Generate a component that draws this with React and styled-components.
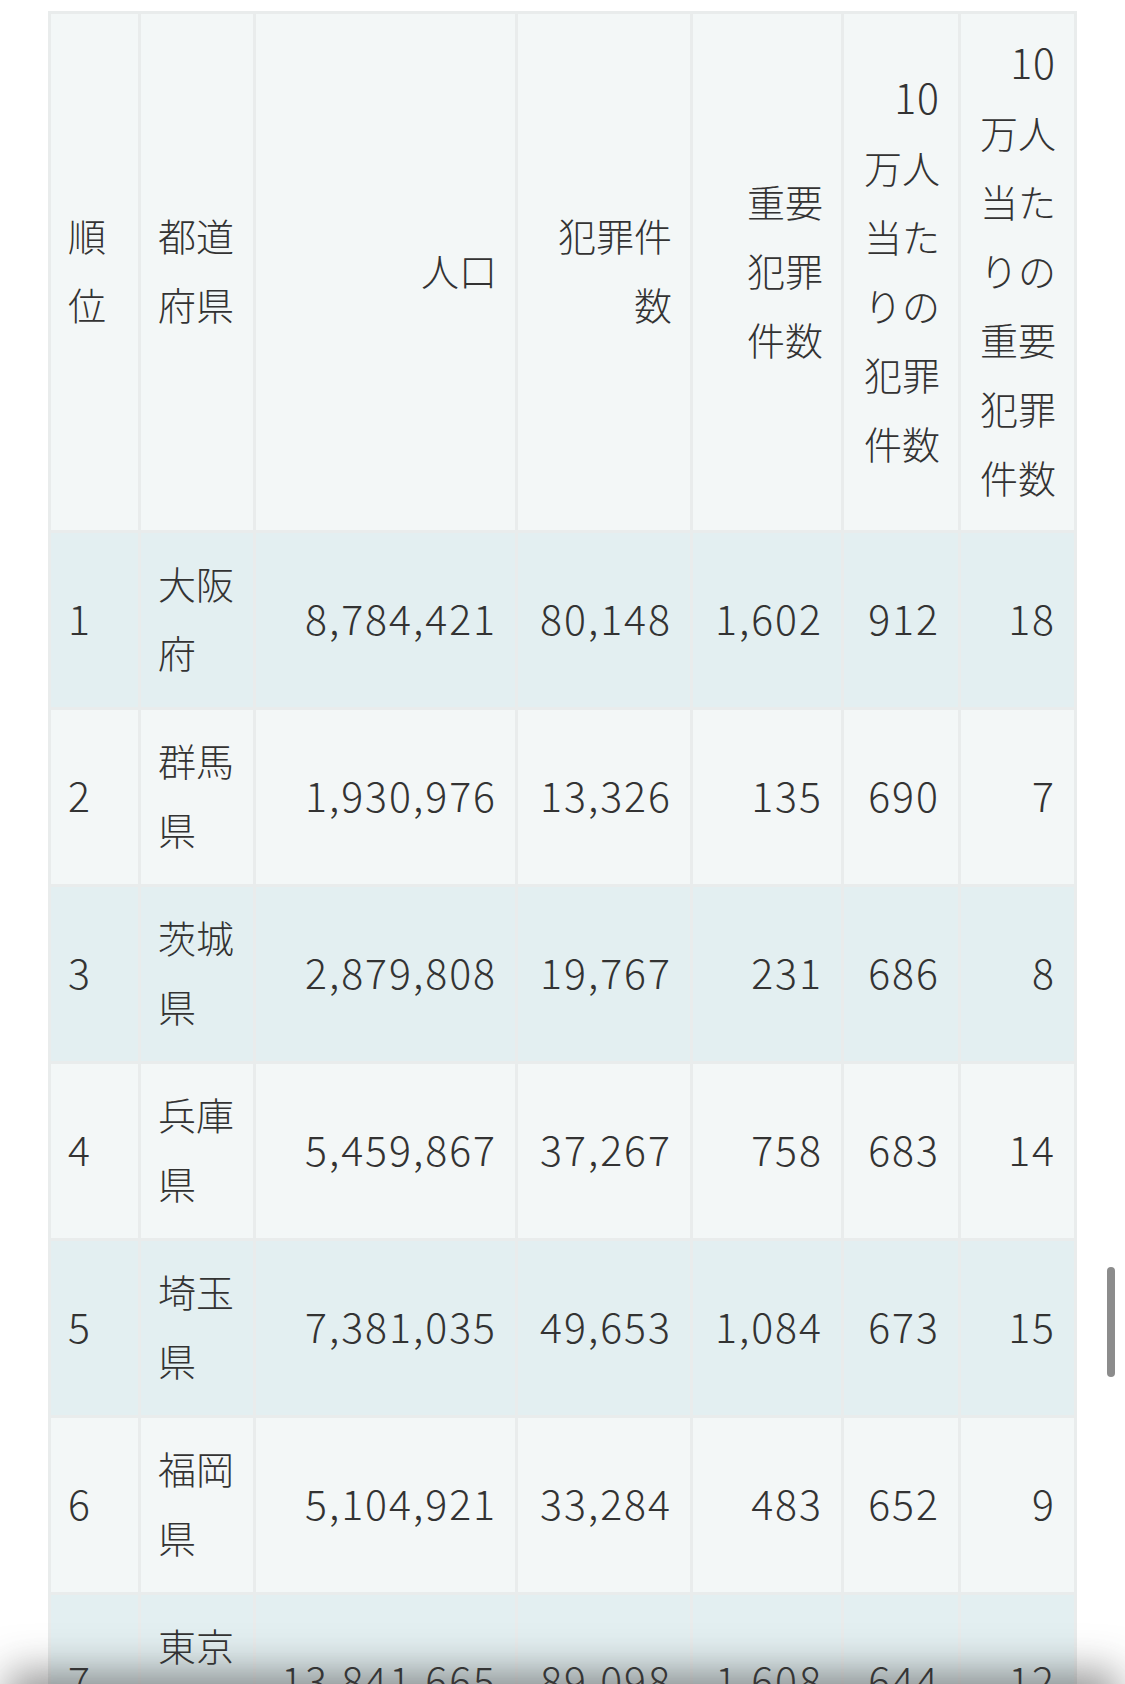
import React from 'react';
import styled, { createGlobalStyle } from 'styled-components';

const COLOURS = {
  text: '#333333',
  head: '#f3f7f7',
  even: '#f3f7f7',
  odd: '#e3eff1',
  line: '#e9ecec',
};

const GlobalStyle = createGlobalStyle`
  html, body {
    margin: 0;
    padding: 0;
    background: #ffffff;
  }
  body {
    font-family: "Noto Sans CJK JP", "Noto Sans", sans-serif;
    color: ${COLOURS.text};
  }
`;

const SPage = styled.div`
  position: relative;
  padding: 11px 0 0 48px;
  height: 1684px;
  overflow: hidden;
  box-sizing: border-box;
`;

const STable = styled.table`
  width: 1029px;
  table-layout: fixed;
  border-collapse: collapse;
  border: 3px solid ${COLOURS.line};
  font-size: 38px;
  line-height: 69px;
  font-weight: 300;
`;

const SHeadCell = styled.th`
  background: ${COLOURS.head};
  border: 3px solid ${COLOURS.line};
  padding: 13px 18px 19px 17px;
  font-weight: 300;
  text-align: ${(p) => (p.$left ? 'left' : 'right')};
  vertical-align: middle;
  white-space: nowrap;
`;

const SDigits = styled.span`
  font-size: 41px;
  letter-spacing: 1px;
`;

const SRow = styled.tr`
  background: ${(p) => (p.$odd ? COLOURS.odd : COLOURS.even)};
`;

const SCell = styled.td`
  border: 3px solid ${COLOURS.line};
  padding: 15px 18px 21px 17px;
  text-align: ${(p) => (p.$left ? 'left' : 'right')};
  vertical-align: middle;
  white-space: nowrap;
  font-size: ${(p) => (p.$num ? '41px' : '38px')};
  letter-spacing: ${(p) => (p.$num ? '2px' : '0')};
`;

const SScrollThumb = styled.div`
  position: absolute;
  left: 1107px;
  top: 1267px;
  width: 8px;
  height: 110px;
  border-radius: 4px;
  background: #8c8c8c;
`;

const SBottomShade = styled.div`
  position: absolute;
  left: 20px;
  right: 20px;
  top: 1690px;
  height: 40px;
  box-shadow: 0 -6px 40px 12px rgba(60, 60, 60, 0.55);
`;

const COLUMNS = [
  { width: 90, left: true, label: ['順', '位'] },
  { width: 115, left: true, label: ['都道', '府県'] },
  { width: 262, label: ['人口'] },
  { width: 175, label: ['犯罪件', '数'] },
  { width: 151, label: ['重要', '犯罪', '件数'] },
  { width: 117, label: [<SDigits key="d">10</SDigits>, '万人', '当た', 'りの', '犯罪', '件数'] },
  { width: 116, label: [<SDigits key="d">10</SDigits>, '万人', '当た', 'りの', '重要', '犯罪', '件数'] },
];

const ROWS = [
  ['1', ['大阪', '府'], '8,784,421', '80,148', '1,602', '912', '18'],
  ['2', ['群馬', '県'], '1,930,976', '13,326', '135', '690', '7'],
  ['3', ['茨城', '県'], '2,879,808', '19,767', '231', '686', '8'],
  ['4', ['兵庫', '県'], '5,459,867', '37,267', '758', '683', '14'],
  ['5', ['埼玉', '県'], '7,381,035', '49,653', '1,084', '673', '15'],
  ['6', ['福岡', '県'], '5,104,921', '33,284', '483', '652', '9'],
  ['7', ['東京', '都'], '13,841,665', '89,098', '1,608', '644', '12'],
];

const Lines = ({ lines }) =>
  lines.map((line, i) => (
    <React.Fragment key={i}>
      {i > 0 && <br />}
      {line}
    </React.Fragment>
  ));

const App = () => {
  return (
    <>
      <GlobalStyle />
      <SPage>
        <STable>
          <colgroup>
            {COLUMNS.map((c, i) => (
              <col key={i} style={{ width: c.width }} />
            ))}
          </colgroup>
          <thead>
            <tr>
              {COLUMNS.map((c, i) => (
                <SHeadCell key={i} $left={c.left}>
                  <Lines lines={c.label} />
                </SHeadCell>
              ))}
            </tr>
          </thead>
          <tbody>
            {ROWS.map((row, r) => (
              <SRow key={r} $odd={r % 2 === 0}>
                {row.map((value, i) => (
                  <SCell key={i} $left={COLUMNS[i].left} $num={i !== 1}>
                    {Array.isArray(value) ? <Lines lines={value} /> : value}
                  </SCell>
                ))}
              </SRow>
            ))}
          </tbody>
        </STable>
        <SScrollThumb />
        <SBottomShade />
      </SPage>
    </>
  );
};

export default App;
